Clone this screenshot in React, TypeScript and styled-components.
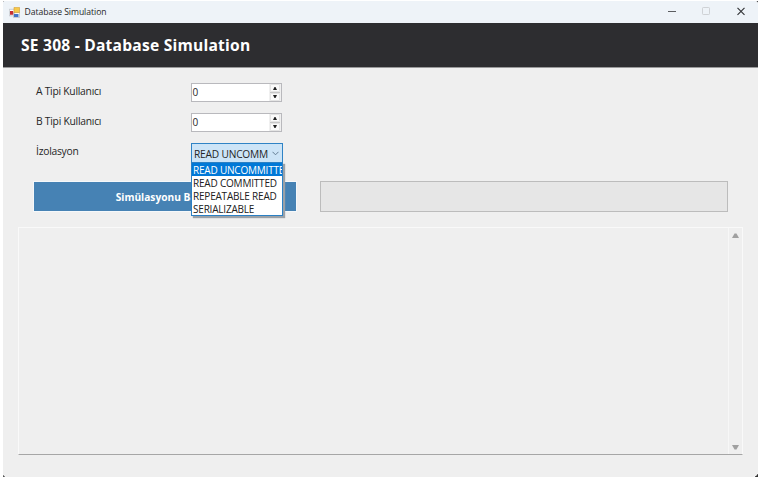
import React from 'react';
import styled, { createGlobalStyle } from 'styled-components';

const GlobalStyle = createGlobalStyle`
  * { box-sizing: border-box; }
  body { margin: 0; background: #fff; overflow: hidden; }
`;

const Page = styled.div`
  width: 758px;
  height: 479px;
  padding: 1px 0 2px 3px;
  background:
    linear-gradient(#333, #333) 100% 1px / 2px 2px no-repeat,
    linear-gradient(#333, #333) 100% 474px / 3px 3px no-repeat,
    linear-gradient(#555, #555) 3px 475px / 2px 2px no-repeat,
    linear-gradient(#777, #777) 3px 1px / 1px 1px no-repeat,
    #fff;
  font-family: 'Open Sans', 'Noto Sans', sans-serif;
  color: #262626;
  white-space: nowrap;
`;

const Window = styled.main`
  height: 476px;
  display: flex;
  flex-direction: column;
  background: #efefef;
  border-radius: 2px 3px 5px 4px;
  overflow: hidden;
`;

const TitleBar = styled.header`
  height: 22px;
  flex: none;
  display: flex;
  align-items: center;
  padding: 0 12px 0 6px;
  background: #eef3f8;
`;

const AppIcon = styled.svg`
  width: 11px;
  height: 11px;
  margin-right: 4.5px;
`;

const WindowTitle = styled.span`
  flex: 1;
  font-size: 8.6px;
  line-height: 20px;
  letter-spacing: -0.04px;
`;

const WindowControls = styled.svg`
  width: 78px;
  height: 10px;
`;

const Banner = styled.h1`
  height: 45px;
  flex: none;
  margin: 0;
  padding: 0 18px;
  background: #2d2d30;
  border-bottom: 1px solid #99999a;
  color: #fff;
  font-size: 15.6px;
  font-weight: 700;
  line-height: 45px;
  letter-spacing: 0.22px;
`;

const Form = styled.section`
  display: grid;
  grid-template-columns: 155px 92px;
  grid-template-rows: 20px 20px 20px;
  row-gap: 10px;
  padding: 15px 0 0 33px;
`;

const Label = styled.label`
  font-size: 10.3px;
  line-height: 16px;
  letter-spacing: -0.25px;
`;

const NumberBox = styled.div`
  width: 91px;
  height: 19px;
  display: flex;
  justify-content: space-between;
  background: #fff;
  border: 1px solid #b9b9bd;
  font-size: 10px;
  line-height: 17px;
  padding-left: 0.5px;
`;

const Spinner = styled.svg`
  width: 12px;
  height: 17px;
`;

const Combo = styled.div`
  position: relative;
  width: 92px;
  height: 20px;
  display: flex;
  align-items: center;
  justify-content: space-between;
  padding: 1px 3px 0 2px;
  background: #cce4f7;
  border: 1px solid #2f83c5;
  font-size: 10.2px;
  letter-spacing: -0.2px;
`;

const Chevron = styled.svg`
  width: 7px;
  height: 5px;
`;

const Menu = styled.ul`
  position: absolute;
  z-index: 2;
  top: 18px;
  left: -1px;
  width: 92px;
  height: 54px;
  margin: 0;
  padding: 0;
  list-style: none;
  overflow: hidden;
  background: #fff;
  border: 1px solid #2b80c4;
  box-shadow: 2px 2px 1px #9ba1a7;
  color: #202020;
  font-size: 10px;
`;

const Option = styled.li<{ $selected?: boolean }>`
  height: 13px;
  padding-left: 1px;
  overflow: hidden;
  line-height: 14px;
  background: ${({ $selected }) => ($selected ? '#0078d7' : '#fff')};
  color: ${({ $selected }) => ($selected ? '#fff' : '#202020')};
`;

const ActionRow = styled.section`
  display: flex;
  gap: 23px;
  margin: 18px 0 0 30px;
`;

const StartButton = styled.button`
  width: 264px;
  height: 31px;
  padding: 0 0 0 1px;
  border: 1px solid #f5f8fa;
  background: #4682b4;
  color: #fff;
  font: 700 10.2px 'Open Sans', sans-serif;
`;

const ProgressBar = styled.div`
  width: 408px;
  height: 31px;
  background: #e6e6e6;
  border: 1px solid #bcbcbc;
`;

const LogPanel = styled.section`
  width: 725px;
  height: 228px;
  margin: 15px 0 0 15px;
  display: flex;
  justify-content: flex-end;
  border: 1px solid #f9f9f9;
  border-bottom-color: #a6a6a6;
`;

const ScrollBar = styled.div`
  width: 14px;
  display: flex;
  flex-direction: column;
  align-items: center;
  justify-content: space-between;
  padding: 5px 0 4px;
  border-left: 1px solid #f7f7f7;
`;

const Arrow = styled.svg`
  width: 7px;
  height: 5px;
  fill: #a0a0a0;
`;

const options = ['READ UNCOMMITTED', 'READ COMMITTED', 'REPEATABLE READ', 'SERIALIZABLE'];

function NumberInput({ value }: { value: number }) {
  return (
    <NumberBox>
      <span>{value}</span>
      <Spinner viewBox="0 0 12 17">
        <path fill="#f0f0f0" d="M0 0h12v17H0z" />
        <path fill="#fafafa" stroke="#e4e4e4" d="M1.5 .5h9v7h-9zM1.5 9.5h9v7h-9z" />
        <path stroke="#c6c6c6" d="M1 8.5h10" />
        <path fill="#222" d="M4 6l1.5-3h1L8 6zM4 11l1.5 3h1L8 11z" />
      </Spinner>
    </NumberBox>
  );
}

export default function App() {
  return (
    <Page>
      <GlobalStyle />
      <Window>
        <TitleBar>
          <AppIcon viewBox="0 0 11 11">
            <path fill="#fff" stroke="#a7aeb7" strokeWidth=".6" d="M.3 2.3h5v6.5h-5zM4.5 5.5h6v5h-6z" />
            <path fill="#c62e31" d="M1 4h3.2v3.8H1z" />
            <path fill="#f7c94a" stroke="#d39c2b" strokeWidth=".6" d="M5 .4h5.5v5.2H5z" />
            <path fill="#4174c7" d="M5 7h4.5v3H5z" />
          </AppIcon>
          <WindowTitle>Database Simulation</WindowTitle>
          <WindowControls viewBox="0 0 78 10" fill="none">
            <path stroke="#5b5d60" strokeWidth="1.2" d="M0 4.5h8" />
            <rect x="34.5" y=".5" width="7" height="7" rx=".7" stroke="#cfd2d6" />
            <path stroke="#37393c" strokeWidth="1.2" d="M69.5 .8l7 7m0-7l-7 7" />
          </WindowControls>
        </TitleBar>
        <Banner>SE 308 - Database Simulation</Banner>
        <Form>
          <Label>A Tipi Kullanıcı</Label>
          <NumberInput value={0} />
          <Label>B Tipi Kullanıcı</Label>
          <NumberInput value={0} />
          <Label>İzolasyon</Label>
          <Combo>
            <span>READ UNCOMM</span>
            <Chevron viewBox="0 0 7 5">
              <path fill="none" stroke="#647e94" d="M.5 .8l3 3 3-3" />
            </Chevron>
            <Menu>
              {options.map((option, index) => (
                <Option key={option} $selected={index === 0}>{option}</Option>
              ))}
            </Menu>
          </Combo>
        </Form>
        <ActionRow>
          <StartButton>Simülasyonu Başlat</StartButton>
          <ProgressBar />
        </ActionRow>
        <LogPanel>
          <ScrollBar>
            <Arrow viewBox="0 0 7 5"><path d="M0 5l2.5-4.5h2L7 5z" /></Arrow>
            <Arrow viewBox="0 0 7 5"><path d="M0 0l2.5 4.5h2L7 0z" /></Arrow>
          </ScrollBar>
        </LogPanel>
      </Window>
    </Page>
  );
}
